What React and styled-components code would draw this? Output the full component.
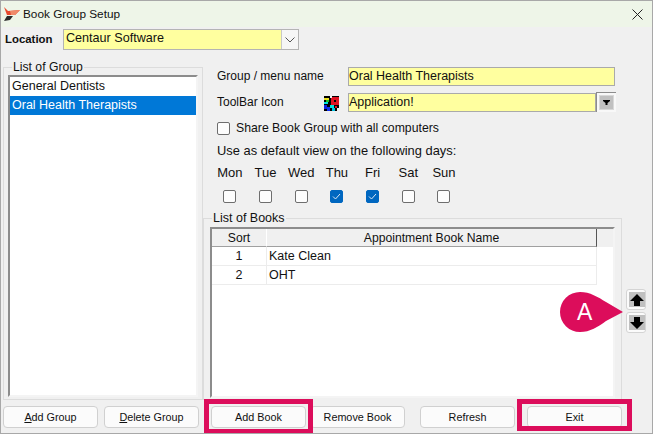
import React from 'react'
import styled, { createGlobalStyle } from 'styled-components'

const days = [
  { name: 'Mon' },
  { name: 'Tue' },
  { name: 'Wed' },
  { name: 'Thu', on: true },
  { name: 'Fri', on: true },
  { name: 'Sat' },
  { name: 'Sun' },
]

const books = [
  { sort: 1, name: 'Kate Clean' },
  { sort: 2, name: 'OHT' },
]

function Logo() {
  return (
    <svg width="18" height="16" viewBox="0 0 18 16">
      <path d="M1 1 L5 5 L17 4 L12 9 L4 9 Z" fill="#e8492e" />
      <path d="M7 5 L17 4 L12 9 L8 9 Z" fill="#f08a6a" />
      <path d="M1 15 L4 10 L10 10 L7 14 Z" fill="#2b2b2b" />
    </svg>
  )
}

function PixelIcon() {
  return (
    <svg width="15" height="15" viewBox="0 0 15 15" shapeRendering="crispEdges">
      <rect width="15" height="15" fill="#000" />
      <rect x="0" y="2" width="5" height="2" fill="#e8e020" />
      <rect x="0" y="6" width="4" height="2" fill="#00e0e0" />
      <rect x="2" y="4" width="3" height="2" fill="#20c020" />
      <rect x="7" y="1" width="8" height="8" fill="#e01020" />
      <rect x="10" y="4" width="2" height="2" fill="#000" />
      <rect x="6" y="0" width="2" height="2" fill="#f0f0f0" />
      <rect x="0" y="9" width="3" height="4" fill="#1020e0" />
      <rect x="3" y="11" width="3" height="4" fill="#1030f0" />
      <rect x="6" y="9" width="4" height="3" fill="#00e0e0" />
      <rect x="8" y="12" width="3" height="3" fill="#00c0e0" />
      <rect x="11" y="10" width="2" height="2" fill="#e01020" />
      <rect x="13" y="12" width="2" height="3" fill="#f0f0f0" />
    </svg>
  )
}

export default function App() {
  return (
    <>
      <GlobalStyle />
      <Window>
        <TitleBar>
          <Logo />
          <Title>Book Group Setup</Title>
          <CloseIcon width="11" height="11" viewBox="0 0 11 11">
            <path d="M0.5 0.5 L10.5 10.5 M10.5 0.5 L0.5 10.5" stroke="#222" strokeWidth="1" fill="none" />
          </CloseIcon>
        </TitleBar>

        <LocationRow>
          <LocationLabel>Location</LocationLabel>
          <LocationCombo>
            <LocationValue>Centaur Software</LocationValue>
            <ComboButton>
              <svg width="10" height="6" viewBox="0 0 10 6">
                <path d="M0.5 0.5 L5 5 L9.5 0.5" stroke="#555" fill="none" />
              </svg>
            </ComboButton>
          </LocationCombo>
        </LocationRow>

        <Main>
          <GroupBox>
            <GroupLegend>List of Group</GroupLegend>
            <GroupList>
              <GroupItem>General Dentists</GroupItem>
              <GroupItem $selected>Oral Health Therapists</GroupItem>
            </GroupList>
          </GroupBox>

          <Details>
            <FieldRow>
              <FieldLabel>Group / menu name</FieldLabel>
              <YellowField>Oral Health Therapists</YellowField>
            </FieldRow>
            <FieldRow>
              <FieldLabel>ToolBar Icon</FieldLabel>
              <IconSlot><PixelIcon /></IconSlot>
              <IconField>Application!</IconField>
              <DropButton>
                <DropFace>
                  <svg width="7" height="5" viewBox="0 0 7 5">
                    <path d="M0 0 H7 V1 L4.5 3 V5 H2.5 V3 L0 1 Z" fill="#000" />
                  </svg>
                </DropFace>
              </DropButton>
            </FieldRow>
            <ShareRow>
              <CheckBox />
              <span>Share Book Group with all computers</span>
            </ShareRow>
            <DefaultLabel>Use as default view on the following days:</DefaultLabel>
            <DayGrid>
              {days.map(day => <DayName key={day.name}>{day.name}</DayName>)}
              {days.map(day => (
                <DayCheck key={day.name}>
                  <CheckBox $on={day.on}>
                    {day.on && (
                      <svg width="9" height="7" viewBox="0 0 9 7">
                        <path d="M1 3.5 L3.5 6 L8 1" stroke="#d8e6f5" fill="none" />
                      </svg>
                    )}
                  </CheckBox>
                </DayCheck>
              ))}
            </DayGrid>

            <BooksRow>
              <BooksBox>
                <BooksLegend>List of Books</BooksLegend>
                <BooksTable>
                  <HeaderRow>
                    <SortHead>Sort</SortHead>
                    <NameHead>Appointment Book Name</NameHead>
                  </HeaderRow>
                  {books.map(book => (
                    <BookRow key={book.sort}>
                      <SortCell>{book.sort}</SortCell>
                      <NameCell>{book.name}</NameCell>
                    </BookRow>
                  ))}
                </BooksTable>
              </BooksBox>
              <ArrowColumn>
                <ArrowButton>
                  <ArrowFace>
                    <svg width="16" height="14" viewBox="0 0 16 14">
                      <path d="M8 1 L15 8 H11 V13 H5 V8 H1 Z" fill="#000" />
                    </svg>
                  </ArrowFace>
                </ArrowButton>
                <ArrowButton>
                  <ArrowFace>
                    <svg width="16" height="14" viewBox="0 0 16 14">
                      <path d="M8 13 L15 6 H11 V1 H5 V6 H1 Z" fill="#000" />
                    </svg>
                  </ArrowFace>
                </ArrowButton>
                <Callout>
                  <svg width="63" height="40" viewBox="0 0 63 40">
                    <path d="M20 0 C30 0 38 5 46 10 L63 20 L46 29 C38 35 30 40 20 40 A20 20 0 0 1 20 0 Z" fill="#dc0d5b" />
                  </svg>
                  <CalloutLetter>A</CalloutLetter>
                </Callout>
              </ArrowColumn>
            </BooksRow>
          </Details>
        </Main>

        <Footer>
          <Button><u>A</u>dd Group</Button>
          <Button $space={6}><u>D</u>elete Group</Button>
          <Button $space={12}>
            Add Book
            <Highlight $top={7} $side={7} $bottom={6} />
          </Button>
          <Button $space={4}>Remove Book</Button>
          <Button $space={15}>Refresh</Button>
          <Button $space={12}>
            Exit
            <Highlight $top={7} $side={10} $bottom={3} />
          </Button>
        </Footer>
      </Window>
    </>
  )
}

const GlobalStyle = createGlobalStyle`
  html, body {
    margin: 0;
    padding: 0;
    background: #f0f0f0;
  }
  * {
    box-sizing: border-box;
  }
`

const Window = styled.div`
  width: 653px;
  height: 434px;
  overflow: hidden;
  display: flex;
  flex-direction: column;
  border: 1px solid #a8a8a8;
  background: #f0f0f0;
  color: #111;
  font-family: "Liberation Sans", Arial, sans-serif;
  font-size: 12.5px;
`

const TitleBar = styled.div`
  height: 26px;
  flex: none;
  display: flex;
  align-items: center;
  padding: 0 9px 0 2px;
  background: #eef5e8;
  font-size: 11.8px;
`

const Title = styled.div`
  flex: 1;
  margin-left: 2px;
`

const CloseIcon = styled.svg`
  flex: none;
`

const LocationRow = styled.div`
  height: 33px;
  flex: none;
  display: flex;
  align-items: flex-start;
  padding: 2px 0 0 4px;
`

const LocationLabel = styled.div`
  width: 58px;
  line-height: 20px;
  font-weight: bold;
  font-size: 11.4px;
`

const LocationCombo = styled.div`
  width: 236px;
  height: 21px;
  display: flex;
  border: 1px solid #b4b4b4;
  background: #ffff9f;
`

const LocationValue = styled.div`
  flex: 1;
  padding-left: 2px;
  line-height: 17px;
  font-size: 12.6px;
`

const ComboButton = styled.div`
  width: 17px;
  display: flex;
  align-items: center;
  justify-content: center;
  background: #f6f6f6;
  border-left: 1px solid #c8c8c8;
`

const Main = styled.div`
  height: 340px;
  flex: none;
  display: flex;
  padding-left: 2px;
`

const GroupLegend = styled.legend`
  margin-left: 3px;
  padding: 0 1px;
  line-height: 14px;
  font-size: 12.2px;
`

const BooksLegend = styled(GroupLegend)`
  margin-left: 2px;
  font-size: 12.5px;
`

const GroupBox = styled.fieldset`
  width: 200px;
  flex: none;
  margin: 0;
  padding: 1px 4px 0 5px;
  border: 1px solid #dcdcdc;
`

const GroupList = styled.div`
  height: 322px;
  border: 2px solid;
  border-color: #8c8c8c #f4f4f4 #f4f4f4 #8c8c8c;
  background: #fff;
  margin-left: -1px;
`

const GroupItem = styled.div`
  height: 19px;
  line-height: 18px;
  padding-left: 2px;
  background: ${p => (p.$selected ? '#0078d7' : 'transparent')};
  color: ${p => (p.$selected ? '#fff' : '#111')};
`

const Details = styled.div`
  flex: 1;
  min-width: 0;
  padding-top: 7px;
  display: flex;
  flex-direction: column;
`

const FieldRow = styled.div`
  height: 26px;
  display: flex;
  align-items: flex-start;
  padding-left: 14px;
`

const FieldLabel = styled.div`
  width: 107px;
  flex: none;
  line-height: 18px;
  font-size: 12px;
  white-space: nowrap;
`

const YellowField = styled.div`
  width: 267px;
  height: 19px;
  margin-left: 24px;
  line-height: 16px;
  border: 1px solid #aaa;
  background: #ffff9f;
`

const IconSlot = styled.div`
  width: 24px;
  flex: none;
  padding-top: 3px;
`

const IconField = styled(YellowField)`
  width: 248px;
  margin-left: 0;
`

const DropButton = styled.div`
  width: 20px;
  height: 20px;
  margin-top: -1px;
  padding: 3px 2px 2px 3px;
  background: #f8f8f8;
  border-top: 1px solid #8c8c8c;
  border-left: 1px solid #8c8c8c;
`

const DropFace = styled.div`
  width: 13px;
  height: 13px;
  display: flex;
  align-items: center;
  justify-content: center;
  background: #c0c0c0;
  outline: 1px solid #d8d8d8;
`

const ShareRow = styled.div`
  display: flex;
  align-items: center;
  gap: 6px;
  height: 18px;
  padding-left: 14px;
  font-size: 12.25px;
`

const DefaultLabel = styled.div`
  margin-top: 5px;
  padding-left: 14px;
  line-height: 18px;
  font-size: 12.9px;
`

const DayGrid = styled.div`
  display: grid;
  grid-template-columns: repeat(7, 35.7px);
  margin: 4px 0 0 9px;
`

const DayName = styled.div`
  text-align: center;
  line-height: 18px;
  height: 25px;
  font-size: 13px;
`

const DayCheck = styled.div`
  display: flex;
  justify-content: center;
  padding-top: 1px;
`

const CheckBox = styled.div`
  width: 13px;
  height: 13px;
  flex: none;
  display: flex;
  align-items: center;
  justify-content: center;
  border-radius: 2px;
  border: 1px solid ${p => (p.$on ? '#0067c0' : '#6e6e6e')};
  background: ${p => (p.$on ? '#0067c0' : '#fdfdfd')};
`

const BooksRow = styled.div`
  flex: 1;
  min-height: 0;
  display: flex;
  margin-top: 8px;
`

const BooksBox = styled.fieldset`
  width: 419px;
  flex: none;
  margin: 0;
  padding: 2px 6px 0;
  border: 1px solid #dcdcdc;
  border-bottom: none;
`

const BooksTable = styled.div`
  height: 171px;
  border: 2px solid;
  border-color: #8c8c8c #f4f4f4 #f4f4f4 #8c8c8c;
  background: #fff;
`

const HeaderRow = styled.div`
  height: 18px;
  display: flex;
  background: #f0f0f0;
  font-size: 12.2px;
`

const SortHead = styled.div`
  width: 55px;
  text-align: center;
  line-height: 19px;
  border-right: 1px solid #fff;
  border-bottom: 1px solid #a0a0a0;
`

const NameHead = styled.div`
  width: 330px;
  text-align: center;
  line-height: 19px;
  border-right: 1px solid #555;
  border-bottom: 1px solid #a0a0a0;
`

const BookRow = styled.div`
  height: 19px;
  width: 385px;
  display: flex;
  border-bottom: 1px solid #ececec;
  border-right: 1px solid #ececec;
`

const SortCell = styled.div`
  width: 55px;
  text-align: center;
  line-height: 19px;
  border-right: 1px solid #ececec;
`

const NameCell = styled.div`
  flex: 1;
  padding-left: 2px;
  line-height: 19px;
`

const ArrowColumn = styled.div`
  position: relative;
  display: flex;
  flex-direction: column;
  gap: 2px;
  padding: 78px 0 0 4px;
`

const ArrowButton = styled.div`
  width: 20px;
  height: 21px;
  padding: 2px;
  border: 1px solid #d4d4d4;
  border-radius: 3px;
  background: #fbfbfb;
`

const ArrowFace = styled.div`
  width: 16px;
  height: 15px;
  display: flex;
  align-items: center;
  justify-content: center;
  background: #c0c0c0;
`

const Callout = styled.div`
  position: absolute;
  top: 81px;
  right: 23px;
  width: 63px;
  height: 40px;
`

const CalloutLetter = styled.div`
  position: absolute;
  left: 17px;
  top: 6px;
  color: #fff;
  font-size: 23px;
  line-height: 28px;
`

const Footer = styled.div`
  flex: 1;
  display: flex;
  align-items: flex-start;
  padding: 6px 0 0 2px;
`

const Button = styled.div`
  position: relative;
  width: 95px;
  height: 22px;
  flex: none;
  margin-left: ${p => p.$space || 0}px;
  text-align: center;
  line-height: 20px;
  font-size: 10.8px;
  border: 1px solid #d0d0d0;
  border-radius: 4px;
  background: #fbfbfb;
`

const Highlight = styled.div`
  position: absolute;
  z-index: 1;
  top: -${p => p.$top + 1}px;
  left: -${p => p.$side + 1}px;
  right: -${p => p.$side + 1}px;
  bottom: -${p => p.$bottom + 1}px;
  border: 5px solid #dc0d5b;
  pointer-events: none;
`
